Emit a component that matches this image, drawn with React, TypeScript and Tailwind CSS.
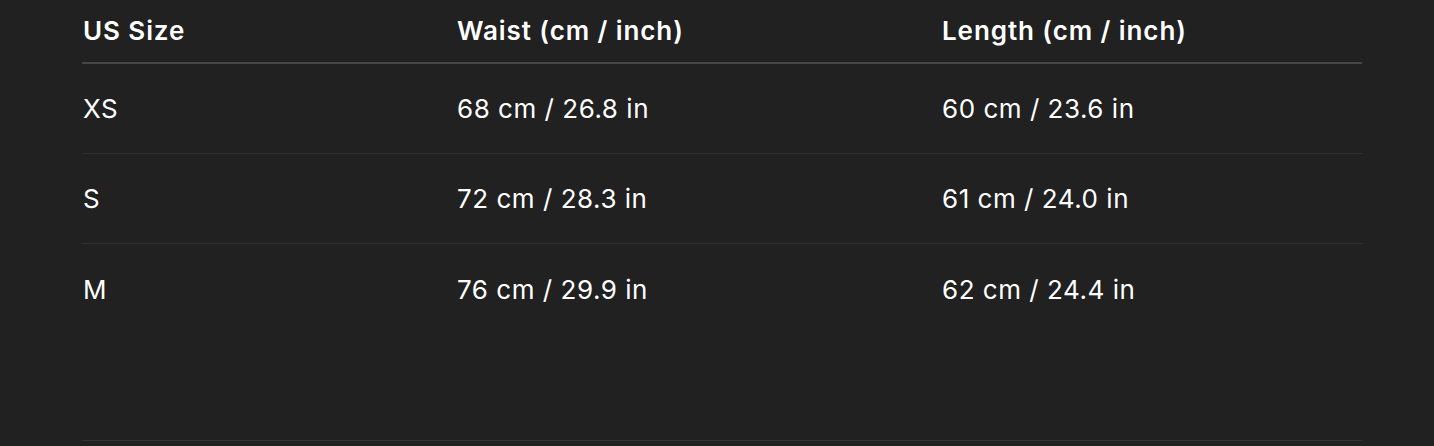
import React from "react";

const rows = [
  ["XS", "68 cm / 26.8 in", "60 cm / 23.6 in"],
  ["S", "72 cm / 28.3 in", "61 cm / 24.0 in"],
  ["M", "76 cm / 29.9 in", "62 cm / 24.4 in"],
];

export default function App() {
  return (
    <div
      className="w-[1434px] h-[446px] bg-[#212121] text-white overflow-hidden"
      style={{ fontFamily: "Inter, 'Noto Sans', sans-serif" }}
    >
      <div className="ml-[82px] w-[1280px] flex flex-col h-full">
        <div className="grid grid-cols-[374px_485px_1fr] h-[64px] items-center border-b-2 border-[#464646] pl-px pb-[2px]">
          <div className="text-[26px] font-semibold tracking-[0.035em]">US Size</div>
          <div className="text-[26px] font-semibold tracking-[0.035em]">Waist (cm / inch)</div>
          <div className="text-[26px] font-semibold tracking-[0.035em]">Length (cm / inch)</div>
        </div>
        {rows.map((r, i) => (
          <div
            key={r[0]}
            className={`grid grid-cols-[374px_485px_1fr] h-[90px] items-center pl-px ${
              i < rows.length - 1 ? "border-b border-[#2f2f2f]" : ""
            }`}
          >
            {r.map((c) => (
              <div key={c} className="text-[26px] tracking-[0.02em]">
                {c}
              </div>
            ))}
          </div>
        ))}
        <div className="flex-1" />
        <div className="h-px bg-[#333333] mb-[5px]" />
      </div>
    </div>
  );
}
